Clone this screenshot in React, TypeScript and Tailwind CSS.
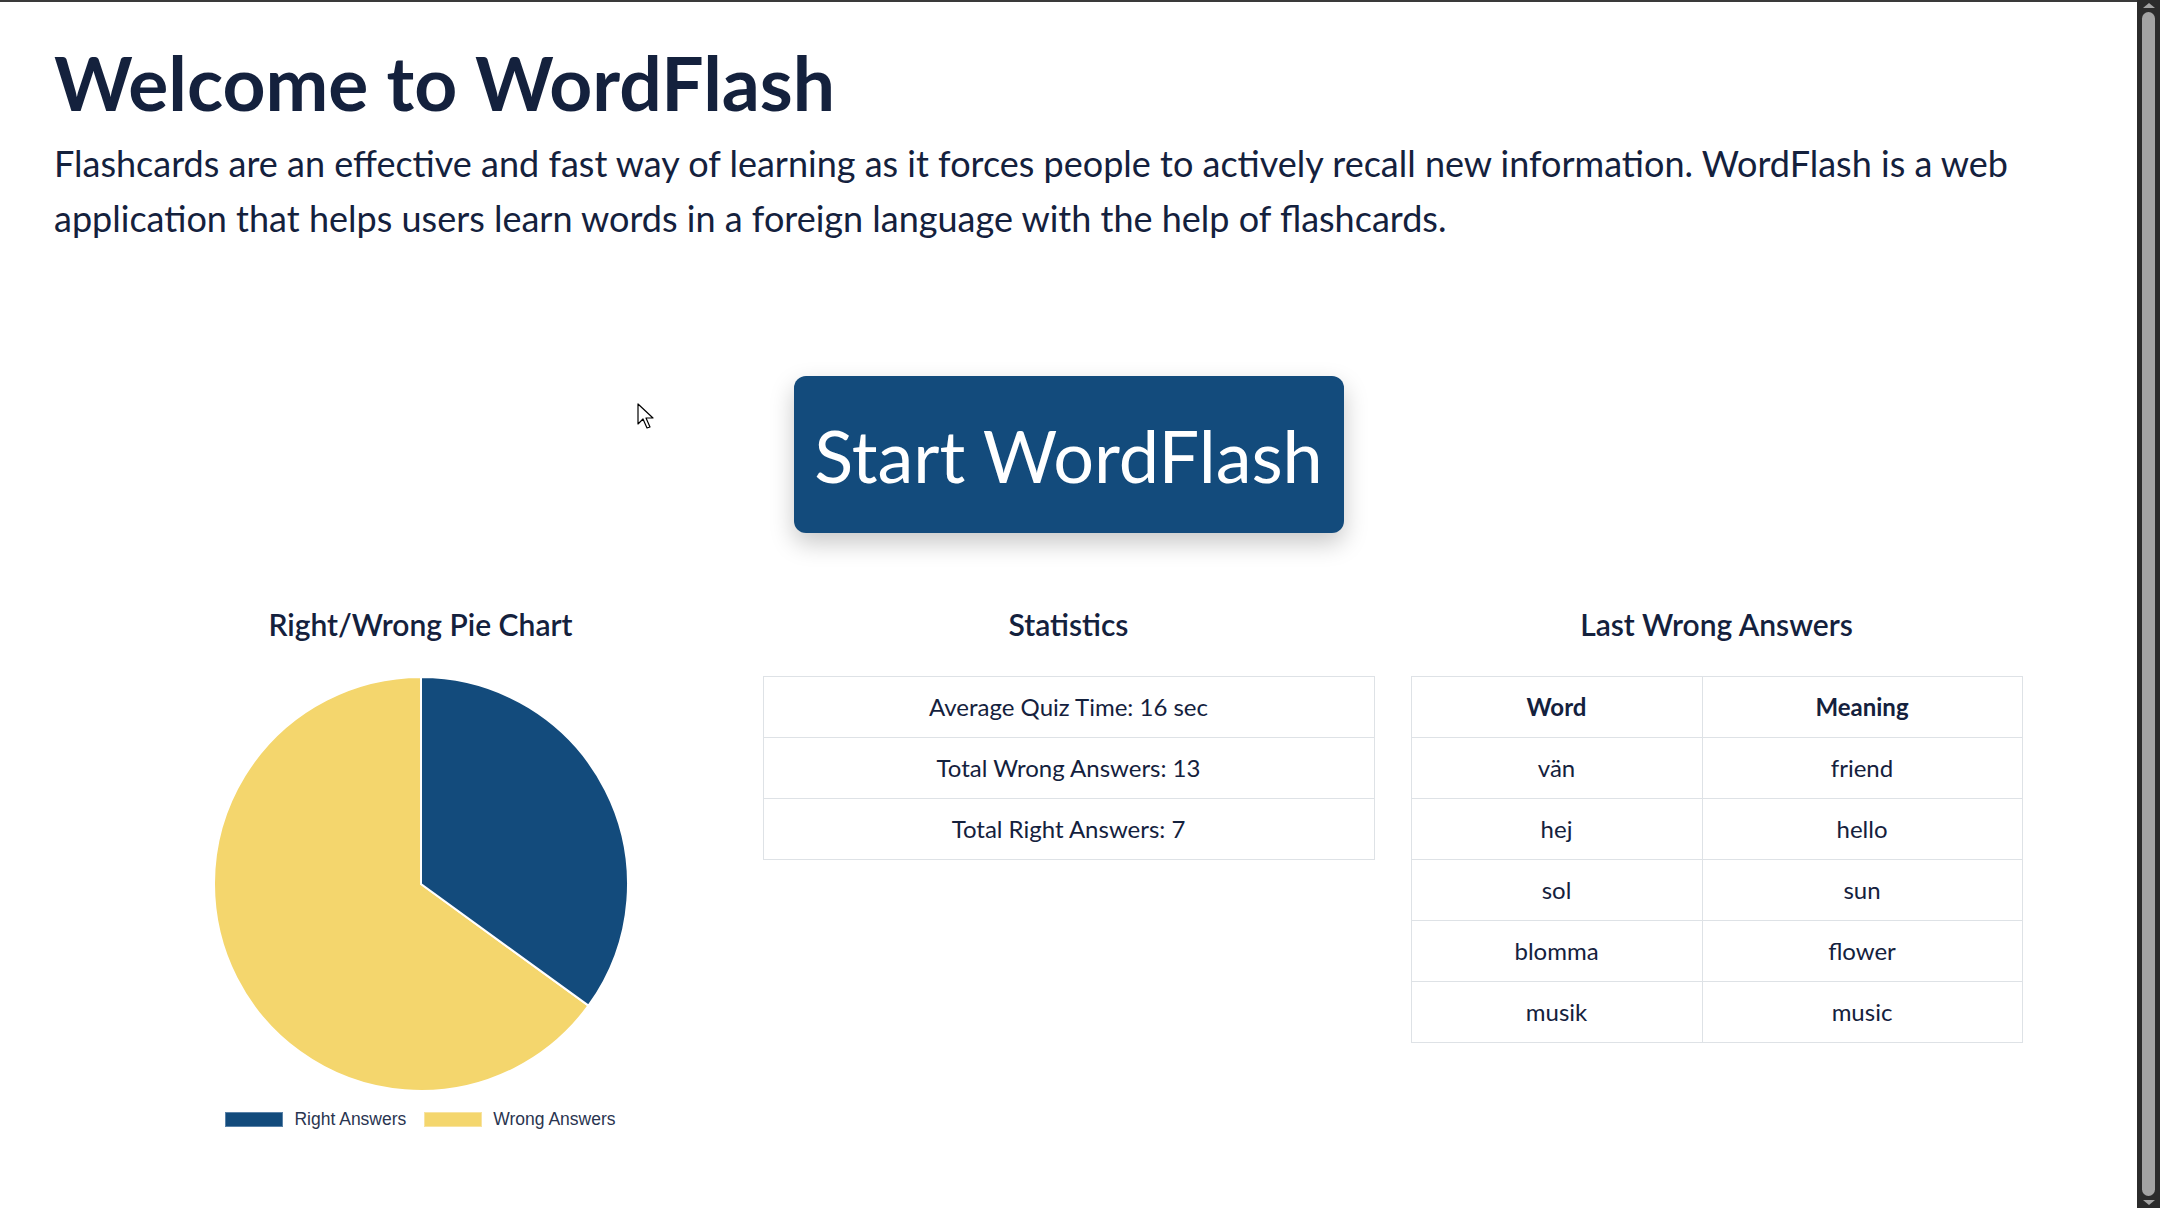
const wrongAnswers = [
  { word: "vän", meaning: "friend" },
  { word: "hej", meaning: "hello" },
  { word: "sol", meaning: "sun" },
  { word: "blomma", meaning: "flower" },
  { word: "musik", meaning: "music" },
];

const stats = [
  "Average Quiz Time: 16 sec",
  "Total Wrong Answers: 13",
  "Total Right Answers: 7",
];

function PieChart() {
  // 7 right / 13 wrong -> right slice spans 126 degrees from the top
  const cx = 210;
  const cy = 210;
  const r = 207;
  const angle = (7 / 20) * Math.PI * 2;
  const ex = cx + r * Math.sin(angle);
  const ey = cy - r * Math.cos(angle);
  return (
    <svg width="420" height="420" viewBox="0 0 420 420">
      <path
        d={`M${cx} ${cy} L${ex} ${ey} A${r} ${r} 0 1 1 ${cx} ${cy - r} Z`}
        fill="#f4d66d"
        stroke="#fff"
        strokeWidth="2"
      />
      <path
        d={`M${cx} ${cy} L${cx} ${cy - r} A${r} ${r} 0 0 1 ${ex} ${ey} Z`}
        fill="#134b7c"
        stroke="#fff"
        strokeWidth="2"
      />
    </svg>
  );
}

export default function App() {
  return (
    <div className="flex h-[1208px] w-full overflow-hidden bg-white font-['Lato','Segoe_UI',sans-serif] text-[#14213d]">
      <main className="relative flex-1 border-t-2 border-[#3a3a3a] px-[54px]">
        <h1 className="mt-[37px] text-[75px] font-bold leading-[86px]">Welcome to WordFlash</h1>
        <p className="mt-[11px] text-[36px] leading-[55px]">
          Flashcards are an effective and fast way of learning as it forces people to actively recall new information.
          WordFlash is a web application that helps users learn words in a foreign language with the help of flashcards.
        </p>

        <div className="mt-[130px] flex justify-center">
          <button className="h-[157px] w-[550px] rounded-xl bg-[#134b7c] text-[72px] leading-none text-white shadow-[0_10px_24px_rgba(0,0,0,0.22)]">
            Start WordFlash
          </button>
        </div>

        <div className="mx-auto mt-[71px] grid w-[1908px] grid-cols-3 gap-x-[36px]">
          <section className="flex flex-col items-center">
            <h2 className="text-[30px] font-semibold leading-[40px]">Right/Wrong Pie Chart</h2>
            <div className="mt-[30px]">
              <PieChart />
            </div>
            <div className="mt-[12px] flex items-center font-['Liberation_Sans',Arial,sans-serif] text-[17.5px] text-[#2a3550]">
              <span className="h-[15px] w-[58px] border border-[#5a82a8] bg-[#134b7c]" />
              <span className="ml-[11px]">Right Answers</span>
              <span className="ml-[18px] h-[15px] w-[58px] border border-[#f8e3a0] bg-[#f4d66d]" />
              <span className="ml-[11px]">Wrong Answers</span>
            </div>
          </section>

          <section className="flex flex-col items-center">
            <h2 className="text-[30px] font-semibold leading-[40px]">Statistics</h2>
            <table className="mt-[32px] w-full border-collapse text-center text-[24px]">
              <tbody>
                {stats.map((s) => (
                  <tr key={s}>
                    <td className="border border-[#dee2e6] py-[12px] leading-[36px]">{s}</td>
                  </tr>
                ))}
              </tbody>
            </table>
          </section>

          <section className="flex flex-col items-center">
            <h2 className="text-[30px] font-semibold leading-[40px]">Last Wrong Answers</h2>
            <table className="mt-[32px] w-full border-collapse text-center text-[24px]">
              <thead>
                <tr>
                  <th className="w-[291px] border border-[#dee2e6] py-[12px] font-bold leading-[36px]">Word</th>
                  <th className="border border-[#dee2e6] py-[12px] font-bold leading-[36px]">Meaning</th>
                </tr>
              </thead>
              <tbody>
                {wrongAnswers.map((w) => (
                  <tr key={w.word}>
                    <td className="border border-[#dee2e6] py-[12px] leading-[36px]">{w.word}</td>
                    <td className="border border-[#dee2e6] py-[12px] leading-[36px]">{w.meaning}</td>
                  </tr>
                ))}
              </tbody>
            </table>
          </section>
        </div>

        {/* mouse pointer left in the capture */}
        <svg className="absolute left-[637px] top-[401px]" width="18" height="28" viewBox="0 0 18 28">
          <path d="M1 1 L1 21 L6 16 L10 25 L13 24 L9 15 L16 15 Z" fill="#fff" stroke="#000" strokeWidth="1.2" strokeLinejoin="round" />
        </svg>
      </main>

      {/* scrollbar */}
      <div className="flex w-[23px] flex-col items-center justify-between bg-[#2b2b2b] py-[3px]">
        <span className="h-0 w-0 border-x-[6px] border-b-[5px] border-x-transparent border-b-[#a3a3a3]" />
        <span className="my-[4px] w-[13px] flex-1 rounded-full bg-[#a3a3a3]" />
        <span className="h-0 w-0 border-x-[6px] border-t-[5px] border-x-transparent border-t-[#a3a3a3]" />
      </div>
    </div>
  );
}
